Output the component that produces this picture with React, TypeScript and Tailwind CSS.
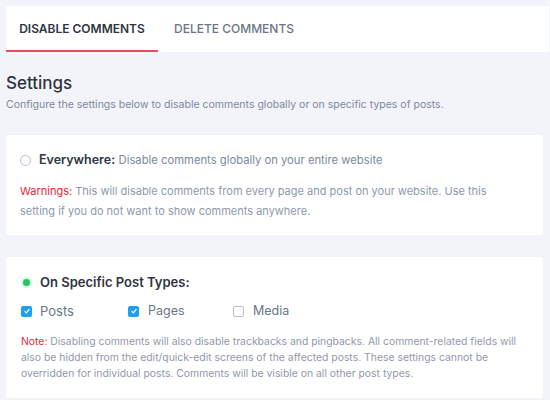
import React from 'react';

function Radio({ checked }: { checked?: boolean }) {
  if (checked) {
    return (
      <span className="flex h-[11px] w-[11px] items-center justify-center rounded-full bg-[#d6f5e3]">
        <span className="h-[7px] w-[7px] rounded-full bg-[#22c55e]" />
      </span>
    );
  }
  return <span className="h-[11px] w-[11px] rounded-full border border-[#b8bfcc] bg-white" />;
}

function Checkbox({ checked }: { checked?: boolean }) {
  if (checked) {
    return (
      <span className="flex h-[11px] w-[11px] items-center justify-center rounded-[2px] bg-[#1ea0f0]">
        <svg viewBox="0 0 10 10" className="h-[8px] w-[8px]">
          <path d="M2 5.2 L4.2 7.3 L8 2.6" fill="none" stroke="white" strokeWidth="1.5" />
        </svg>
      </span>
    );
  }
  return <span className="h-[11px] w-[11px] rounded-[2px] border border-[#b8bfcc] bg-white" />;
}

export default function App() {
  return (
    <div className="h-[400px] w-[550px] overflow-hidden bg-[#f3f4f9] pl-[6px] pt-[6px] font-['Inter',sans-serif]">
      {/* Tabs */}
      <div className="flex h-[46px] w-[543px] rounded-tl-[3px] bg-white">
        <div className="flex w-[152px] items-center justify-center border-b-2 border-[#e5505f] pt-[2px] text-[12px] font-semibold text-[#2f3542]">
          DISABLE COMMENTS
        </div>
        <div className="flex items-center pl-[16px] text-[12px] font-medium text-[#6b7588]">DELETE COMMENTS</div>
      </div>

      {/* Heading */}
      <h2 className="mt-[20px] text-[17px] font-medium leading-[22px] text-[#2f3542]">Settings</h2>
      <p className="mt-[4px] text-[10.5px] leading-[14px] text-[#7d889c]">
        Configure the settings below to disable comments globally or on specific types of posts.
      </p>

      {/* Everywhere */}
      <div className="mt-[23px] w-[537px] rounded-[3px] bg-white px-[14px] pb-[14px] pt-[16px]">
        <div className="flex items-center gap-[8px]">
          <Radio />
          <p className="text-[12px] leading-[18px] text-[#7d889c]">
            <span className="text-[12.5px] font-semibold text-[#2f3542]">Everywhere:</span>{' '}
            <span className="text-[11.25px]">Disable comments globally on your entire website</span>
          </p>
        </div>
        <p className="mt-[12px] text-[11px] leading-[20px] text-[#8f99ac]">
          <span className="text-[#e5283c]">Warnings:</span> This will disable comments from every page and post on your website. Use this
          <br />
          setting if you do not want to show comments anywhere.
        </p>
      </div>

      {/* Specific post types */}
      <div className="mt-[22px] w-[537px] rounded-[3px] bg-white px-[15px] pb-[16px] pt-[16px]">
        <div className="flex items-center gap-[8px]">
          <Radio checked />
          <p className="text-[13px] font-semibold leading-[18px] text-[#2f3542]">On Specific Post Types:</p>
        </div>
        <div className="mt-[11px] flex items-center text-[12.5px] leading-[18px] text-[#6b7588]">
          <label className="flex w-[107px] items-center gap-[8px]">
            <Checkbox checked />
            <span className="text-[13px]">Posts</span>
          </label>
          <label className="flex w-[105px] items-center gap-[9px]">
            <Checkbox checked />
            Pages
          </label>
          <label className="flex items-center gap-[9px]">
            <Checkbox />
            Media
          </label>
        </div>
        <p className="mt-[14px] text-[10.4px] leading-[16px] text-[#8f99ac]">
          <span className="text-[#e5283c]">Note:</span> Disabling comments will also disable trackbacks and pingbacks. All comment-related fields will
          <br />
          also be hidden from the edit/quick-edit screens of the affected posts. These settings cannot be
          <br />
          overridden for individual posts. Comments will be visible on all other post types.
        </p>
      </div>
    </div>
  );
}
